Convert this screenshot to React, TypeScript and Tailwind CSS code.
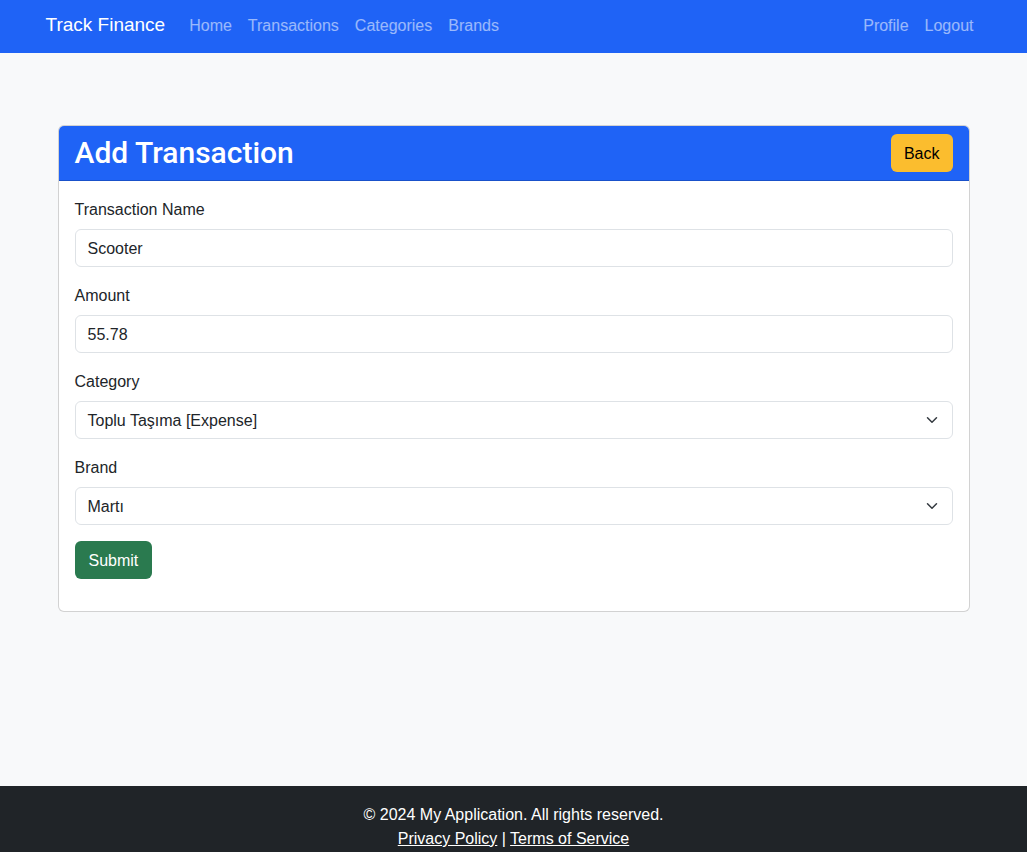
import React from "react";

const font = { fontFamily: '"Liberation Sans", Arial, sans-serif' };

function Chevron() {
  return (
    <svg className="absolute right-[12px] top-1/2 -translate-y-1/2 w-4 h-3" viewBox="0 0 16 16" fill="none">
      <path d="m2 5 6 6 6-6" stroke="#343a40" strokeWidth="2" strokeLinecap="round" strokeLinejoin="round" />
    </svg>
  );
}

function Field({ label, value, select }: { label: string; value: string; select?: boolean }) {
  return (
    <div className="mb-4">
      <div className="mb-2 pt-px h-6 text-base leading-6 text-[#212529]">{label}</div>
      <div className="relative h-[38px] rounded-[6px] border border-[#dee2e6] bg-white px-3 pt-px flex items-center text-base text-[#212529]">
        {value}
        {select && <Chevron />}
      </div>
    </div>
  );
}

export default function App() {
  return (
    <div className="min-h-screen bg-[#f8f9fa]" style={font}>
      {/* Navbar */}
      <nav className="h-[53px] bg-[#1f63f6]">
        <div className="mx-auto max-w-[960px] px-3 pb-[2px] h-full flex items-center">
          <span className="text-[19px] text-white mr-4">Track Finance</span>
          <div className="flex text-base text-white/55">
            <span className="px-2">Home</span>
            <span className="px-2">Transactions</span>
            <span className="px-2">Categories</span>
            <span className="px-2">Brands</span>
          </div>
          <div className="ml-auto flex text-base text-white/55">
            <span className="px-2">Profile</span>
            <span className="px-2">Logout</span>
          </div>
        </div>
      </nav>

      {/* Main */}
      <main className="min-h-[733px]">
        <div className="mx-auto max-w-[960px] px-3 pt-[72px]">
          <div className="mx-3 rounded-[6px] border border-black/[.175] bg-white overflow-hidden">
            <div className="flex items-center justify-between bg-[#1f63f6] px-4 py-2 border-b border-black/[.175]">
              <h2
                className="text-[30px] leading-[38px] font-medium text-white"
                style={{ fontFamily: 'Roboto, "Liberation Sans", Arial, sans-serif' }}
              >
                Add Transaction
              </h2>
              <button className="h-[38px] rounded-[6px] bg-[#fbbd2e] px-[13px] pt-px text-base text-black">Back</button>
            </div>
            <div className="p-4">
              <Field label="Transaction Name" value="Scooter" />
              <Field label="Amount" value="55.78" />
              <Field label="Category" value="Toplu Taşıma [Expense]" select />
              <Field label="Brand" value="Martı" select />
              <div className="mb-4">
                <button className="h-[38px] rounded-[6px] bg-[#2a7a4f] px-[14px] pt-px text-base text-white">Submit</button>
              </div>
            </div>
          </div>
        </div>
      </main>

      {/* Footer */}
      <footer className="bg-[#202428] pt-4 pb-4 text-center text-base leading-6 text-white">
        <p className="pt-px">© 2024 My Application. All rights reserved.</p>
        <p>
          <a className="underline">Privacy Policy</a> | <a className="underline">Terms of Service</a>
        </p>
      </footer>
    </div>
  );
}
